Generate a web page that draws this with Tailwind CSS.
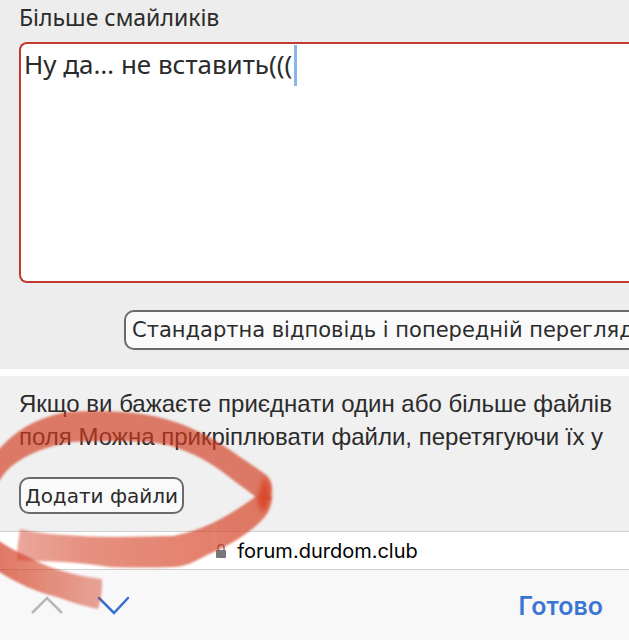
<!DOCTYPE html>
<html lang="uk">
    <head>
        <meta charset="UTF-8">
        <meta name="viewport" content="width=device-width, initial-scale=1">
        <title>forum.durdom.club</title>
        <script src="https://cdn.jsdelivr.net/npm/@tailwindcss/browser@4"></script>
    </head>
    <body class="relative min-h-screen flex flex-col overflow-x-hidden bg-white text-[#2b2b2b]">
        <main class="flex flex-1 flex-col gap-[7px]">
            <form class="flex flex-col bg-[#ededed] pl-[19px] pb-[19px] overflow-hidden">
                <label for="message" class="h-[42px] pt-[3px] font-['Noto_Sans',sans-serif] text-[23px] leading-7 whitespace-nowrap">Більше смайликів</label>
                <div class="relative">
                    <textarea id="message" class="block w-full h-[241px] resize-none overflow-hidden rounded-l-lg border-2 border-r-0 border-[#c23b31] bg-white pl-[3px] font-['Noto_Sans',sans-serif] text-[26px] leading-10 outline-none">Ну да… не вставить(((</textarea>
                    <span class="absolute left-[275px] top-[3px] h-[41px] w-[3px] bg-[#8ab4ec]"></span>
                </div>
                <div class="mt-[27px] ml-[105px] flex">
                    <button type="button" class="h-10 shrink-0 rounded-[10px] border-2 border-[#6a6a6c] bg-[#fafafa] px-[6px] font-['DejaVu_Sans',sans-serif] text-[21px] leading-8 whitespace-nowrap">Стандартна відповідь і попередній перегляд</button>
                </div>
            </form>
            <section class="flex-1 bg-[#f0f0f0] pl-[19px] pt-[11px] pb-[17px] overflow-hidden">
                <p class="font-['Liberation_Sans',sans-serif] text-[24px] leading-[33px] whitespace-nowrap">Якщо ви бажаєте приєднати один або більше файлів<br>поля Можна прикріплювати файли, перетягуючи їх у</p>
                <button type="button" class="mt-[24px] block h-[37px] rounded-[10px] border-2 border-[#6a6a6c] bg-[#fafafa] px-1 font-['DejaVu_Sans',sans-serif] text-[20px] leading-8 whitespace-nowrap">Додати файли</button>
            </section>
        </main>
        <footer>
            <div class="flex h-[39px] items-center justify-center gap-[10px] border-y border-[#cfcfcf] bg-white pl-1 text-black">
                <svg class="h-4 w-3" viewBox="0 0 12 16" aria-hidden="true">
                    <path d="M3 7V4.500a3 3 0 0 1 6 0V7" fill="none" stroke="#77787a" stroke-width="1.500"/>
                    <rect x="1" y="7" width="10" height="8" rx="1" fill="#77787a"/>
                </svg>
                <span class="font-[Inter,sans-serif] text-[20px]">forum.durdom.club</span>
            </div>
            <div class="flex h-[70px] items-center justify-between bg-[#f8f8f8] pl-[30px] pr-[26px]">
                <div class="flex gap-[34px]">
                    <button type="button" aria-label="Попереднє поле">
                        <svg class="h-5 w-[33px]" viewBox="0 0 33 20" fill="none" stroke="#b8b8b8" stroke-width="2.500"><path d="M2 18 17 3l15 15"/></svg>
                    </button>
                    <button type="button" aria-label="Наступне поле">
                        <svg class="h-5 w-[33px]" viewBox="0 0 33 20" fill="none" stroke="#3570d0" stroke-width="2.500" stroke-linecap="round"><path d="m2 3 15 15L31 3"/></svg>
                    </button>
                </div>
                <button type="button" class="pt-1 font-[Inter,sans-serif] text-[25px] font-semibold text-[#3b75d3]">Готово</button>
            </div>
        </footer>
        <!-- red marker drawn over the attachment button -->
        <svg class="pointer-events-none absolute bottom-0 left-0 h-[240px] w-[290px]" viewBox="0 400 290 240" aria-hidden="true">
            <defs>
                <filter id="soft" x="-5%" y="-5%" width="110%" height="110%"><feGaussianBlur stdDeviation="0.800"/></filter>
                <filter id="softer" x="-50%" y="-20%" width="200%" height="140%"><feGaussianBlur stdDeviation="2.500"/></filter>
                <linearGradient id="fade" x1="0" x2="1"><stop offset="0" stop-color="#d33c20" stop-opacity=".45"/><stop offset=".3" stop-color="#d33c20" stop-opacity=".58"/><stop offset="1" stop-color="#d63c20" stop-opacity=".68"/></linearGradient>
                <linearGradient id="tail" x1="0" x2="1"><stop offset="0" stop-color="#d33c20" stop-opacity=".7"/><stop offset="1" stop-color="#d33c20" stop-opacity=".45"/></linearGradient>
            </defs>
            <g filter="url(#soft)">
                <path fill="#d33c20" fill-opacity=".65" d="M-4 453C12 433 34 418 67 412Q95 410 123 412C170 415 203 431 233 452 246 461 257 468 266 475Q272 480 272 489L271 500 256 497Q238 484 220 470C198 455 175 444 147 442Q110 440 73 442C46 446 28 454 13 465Q5 471-4 486Z"/>
                <path fill="url(#fade)" d="M20 529Q40 534 65 535 90 537 115 537L173 536C205 530 230 515 255 497L272 497Q271 512 260 522C244 537 226 547 207 555 194 562 185 567 173 567Q142 568 110 567 85 563 63 562 38 561 17 560 17 545 20 529Z"/>
                <path fill="url(#tail)" d="M-4 539Q8 547 20 553 35 561 50 567 75 576 102 579 103 594 98 609 78 605 60 598 43 594 27 587 10 579-4 570Z"/>
            </g>
            <path filter="url(#softer)" fill="#d8391b" fill-opacity=".75" d="M263 476Q270 482 270 492T265 511Q259 513 257 497 262 488 263 476Z"/>
        </svg>
    </body>
</html>
